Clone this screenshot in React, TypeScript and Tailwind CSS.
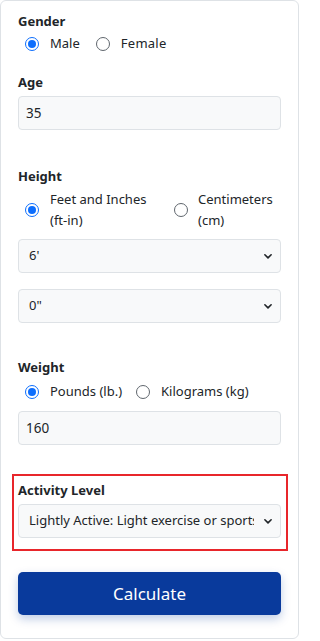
import React, { useState } from 'react';

const font = { fontFamily: '"Noto Sans", "Open Sans", Arial, sans-serif' };

function Radio({ checked }: { checked: boolean }) {
  return checked ? (
    <span className="flex h-[14px] w-[14px] shrink-0 items-center justify-center rounded-full border-[1.5px] border-[#0d6efd] bg-white">
      <span className="block h-[8px] w-[8px] rounded-full bg-[#0d6efd]" />
    </span>
  ) : (
    <span className="block h-[14px] w-[14px] shrink-0 rounded-full border border-[#5f666d] bg-white" />
  );
}

function Label({ children }: { children: React.ReactNode }) {
  return <div className="text-[13px] font-bold leading-[22px] text-[#212529]">{children}</div>;
}

function Select({ value, options }: { value: string; options: string[] }) {
  return (
    <div className="relative h-[34px] w-full">
      <select
        defaultValue={value}
        className="h-full w-full appearance-none rounded-[4px] border border-[#dee2e6] bg-[#f8f9fa] pl-[10px] pr-[26px] text-[13px] text-[#212529] outline-none"
        style={font}
      >
        {options.map((o) => (
          <option key={o}>{o}</option>
        ))}
      </select>
      <svg
        className="pointer-events-none absolute right-[8px] top-1/2 -translate-y-1/2"
        width="10"
        height="10"
        viewBox="0 0 16 16"
        fill="none"
        stroke="#212529"
        strokeWidth="2.6"
        strokeLinecap="round"
        strokeLinejoin="round"
      >
        <path d="M3 6l5 5 5-5" />
      </svg>
    </div>
  );
}

function TextInput({ value }: { value: string }) {
  return (
    <input
      defaultValue={value}
      className="h-[34px] w-full rounded-[4px] border border-[#dee2e6] bg-[#f8f9fa] px-[7px] text-[13.5px] text-[#212529] outline-none"
      style={font}
    />
  );
}

export default function App() {
  const [gender] = useState('male');

  return (
    <div className="bg-white" style={font}>
      <div className="flex h-[639px] w-[299px] flex-col rounded-md border border-[#dee2e6] px-[17px] pt-[9px] text-[#212529]">
        {/* Gender */}
        <Label>Gender</Label>
        <div className="flex h-[24px] items-center text-[13px]">
          <span className="ml-[7px]">
            <Radio checked={gender === 'male'} />
          </span>
          <span className="ml-[11px]">Male</span>
          <span className="ml-[16px]">
            <Radio checked={gender === 'female'} />
          </span>
          <span className="ml-[11px] tracking-[0.02em]">Female</span>
        </div>

        {/* Age */}
        <div className="mt-[15px]">
          <Label>Age</Label>
        </div>
        <div className="mt-[3px]">
          <TextInput value="35" />
        </div>

        {/* Height */}
        <div className="mt-[35px]">
          <Label>Height</Label>
        </div>
        <div className="mt-[2px] flex text-[13px] leading-[21px]">
          <div className="flex w-[149px] items-center">
            <span className="ml-[7px]">
              <Radio checked />
            </span>
            <span className="ml-[11px]">
              Feet and Inches
              <br />
              (ft-in)
            </span>
          </div>
          <div className="flex items-center">
            <span className="ml-[7px]">
              <Radio checked={false} />
            </span>
            <span className="ml-[10px]">
              Centimeters
              <br />
              (cm)
            </span>
          </div>
        </div>
        <div className="mt-[8px]">
          <Select value="6'" options={["4'", "5'", "6'", "7'"]} />
        </div>
        <div className="mt-[16px]">
          <Select value={'0"'} options={['0"', '1"', '2"', '3"', '4"', '5"', '6"', '7"', '8"', '9"', '10"', '11"']} />
        </div>

        {/* Weight */}
        <div className="mt-[33px]">
          <Label>Weight</Label>
        </div>
        <div className="mt-[2px] flex h-[24px] items-center text-[13px]">
          <span className="ml-[7px]">
            <Radio checked />
          </span>
          <span className="ml-[11px]">Pounds (lb.)</span>
          <span className="ml-[14px]">
            <Radio checked={false} />
          </span>
          <span className="ml-[11px]">Kilograms (kg)</span>
        </div>
        <div className="mt-[7px]">
          <TextInput value="160" />
        </div>

        {/* Activity Level (highlighted) */}
        <div className="-ml-[6px] -mr-[7px] mt-[29px] border-2 border-[#e8262b] pb-[11px] pl-[4px] pr-[5px] pt-[3px]">
          <Label>Activity Level</Label>
          <div className="mt-[3px]">
            <Select
              value="Lightly Active: Light exercise or sports 1-3 days/week"
              options={[
                'Sedentary: Little or no exercise',
                'Lightly Active: Light exercise or sports 1-3 days/week',
                'Moderately Active: Moderate exercise 3-5 days/week',
                'Very Active: Hard exercise 6-7 days/week',
              ]}
            />
          </div>
        </div>

        <button className="mt-[21px] h-[43px] w-full rounded-[5px] bg-[#093a9c] text-[17px] text-white shadow-[0_4px_10px_rgba(9,58,156,0.25)]">
          Calculate
        </button>
      </div>
    </div>
  );
}
